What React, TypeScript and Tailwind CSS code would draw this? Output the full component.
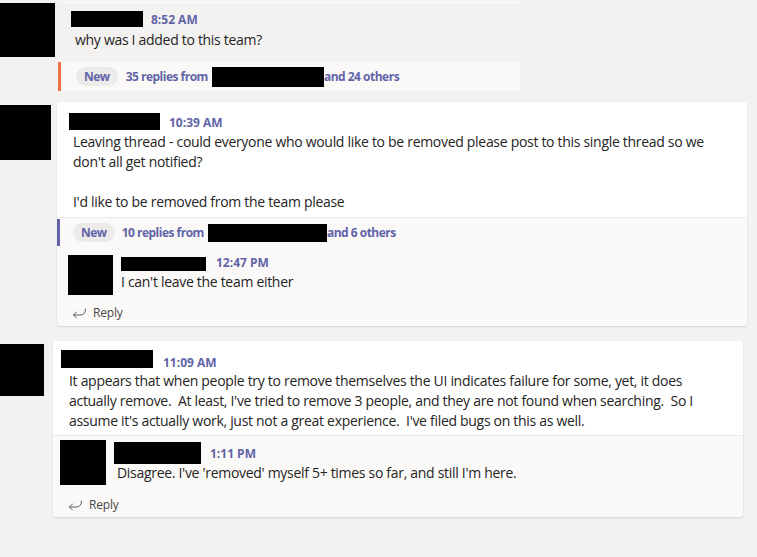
import React from 'react';

const font = { fontFamily: '"Segoe UI", "Open Sans", "Noto Sans", sans-serif' };

const Redact = ({ className }: { className: string }) => <div className={`bg-black ${className}`} />;

const ReplyIcon = () => (
  <svg width="15" height="12" viewBox="0 0 15 12" fill="none" stroke="#605e5c" strokeWidth="1" strokeLinecap="round" strokeLinejoin="round">
    <path d="M13.5 2 Q13.5 8 8 8 H1.5" />
    <path d="M4.5 5 L1.5 8 L4.5 11" />
  </svg>
);

const Time = ({ className, children }: { className: string; children: React.ReactNode }) => (
  <div className={`text-[12px] font-bold text-[#6264a7] leading-none ${className}`}>{children}</div>
);

const NewPill = () => (
  <span className="inline-flex items-center h-[19px] px-[8px] rounded-full bg-[#edebe9] text-[12px] font-bold text-[#6264a7]">New</span>
);

const ReplyRow = ({ pad }: { pad: string }) => (
  <div className={`flex items-center gap-[6px] h-[22px] ${pad}`}>
    <ReplyIcon />
    <span className="text-[12px] text-[#484644] tracking-[-0.2px]">Reply</span>
  </div>
);

const Body = ({ className, children }: { className: string; children: React.ReactNode }) => (
  <div className={`text-[14px] leading-[20px] tracking-[-0.3px] ${className}`}>{children}</div>
);

export default function App() {
  return (
    <div className="w-[757px] h-[557px] bg-[#f3f2f1] overflow-hidden text-[#252423]" style={font}>
      {/* thread 1 */}
      <div className="flex gap-[3px] pt-[1px]">
        <Redact className="w-[55px] h-[54px] mt-[2px] shrink-0" />
        <div className="w-[462px]">
          <div className="border-t-2 border-[#f8f7f6] pl-[13px] pt-[8px] h-[61px]">
            <div className="flex items-start gap-[8px]">
              <Redact className="w-[72px] h-[16px]" />
              <Time className="mt-[3px]">8:52 AM</Time>
            </div>
            <Body className="pl-[4px] mt-[3px]">why was I added to this team?</Body>
          </div>
          <div className="h-[29px] bg-[#faf9f8] border-l-[3px] border-[#e97548] flex items-center pl-[15px] text-[12px] font-bold text-[#6264a7] tracking-[-0.5px]">
            <NewPill />
            <span className="ml-[8px]">35 replies from</span>
            <Redact className="w-[112px] h-[20px] ml-[4px]" />
            <span>and 24 others</span>
          </div>
        </div>
      </div>

      {/* thread 2 */}
      <div className="flex gap-[6px] mt-[11px]">
        <Redact className="w-[51px] h-[55px] mt-[3px] shrink-0" />
        <div className="w-[690px] h-[224px] rounded-[3px] bg-[#faf9f8] shadow-[0_1px_2px_rgba(0,0,0,0.12)] overflow-hidden">
          <div className="bg-white h-[116px] border-b border-[#edebe9] pl-[12px] pt-[11px]">
            <div className="flex items-start gap-[9px]">
              <Redact className="w-[91px] h-[17px]" />
              <Time className="mt-[4px]">10:39 AM</Time>
            </div>
            <Body className="pl-[4px] mt-[2px]">
              Leaving thread - could everyone who would like to be removed please post to this single thread so we<br />
              don't all get notified?<br />
              <br />
              I'd like to be removed from the team please
            </Body>
          </div>
          <div className="h-[27px] mt-[1px] border-l-[3px] border-[#6264a7] flex items-center pl-[13px] text-[12px] font-bold text-[#6264a7] tracking-[-0.5px]">
            <NewPill />
            <span className="ml-[7px]">10 replies from</span>
            <Redact className="w-[119px] h-[18px] ml-[4px]" />
            <span>and 6 others</span>
          </div>
          <div className="flex gap-[8px] pl-[11px] pt-[9px]">
            <Redact className="w-[45px] h-[40px] shrink-0" />
            <div>
              <div className="flex items-start gap-[10px] mt-[2px]">
                <Redact className="w-[85px] h-[14px]" />
                <Time className="mt-0">12:47 PM</Time>
              </div>
              <Body className="mt-[1px]">I can't leave the team either</Body>
            </div>
          </div>
          <ReplyRow pad="pl-[15px] mt-[7px]" />
        </div>
      </div>

      {/* thread 3 */}
      <div className="flex gap-[9px] mt-[15px]">
        <Redact className="w-[44px] h-[52px] mt-[3px] shrink-0" />
        <div className="w-[690px] h-[176px] rounded-[3px] bg-[#faf9f8] shadow-[0_1px_2px_rgba(0,0,0,0.12)] overflow-hidden">
          <div className="bg-white h-[95px] border-b border-[#edebe9] pl-[8px] pt-[9px]">
            <div className="flex items-start gap-[10px]">
              <Redact className="w-[92px] h-[18px]" />
              <Time className="mt-[7px]">11:09 AM</Time>
            </div>
            <Body className="pl-[8px] mt-[2px]">
              It appears that when people try to remove themselves the UI indicates failure for some, yet, it does<br />
              actually remove.&nbsp; At least, I've tried to remove 3 people, and they are not found when searching.&nbsp; So I<br />
              assume it's actually work, just not a great experience.&nbsp; I've filed bugs on this as well.
            </Body>
          </div>
          <div className="flex gap-[8px] pl-[7px] pt-[4px]">
            <Redact className="w-[46px] h-[45px] shrink-0" />
            <div>
              <div className="flex items-start gap-[9px] mt-[2px]">
                <Redact className="w-[87px] h-[22px]" />
                <Time className="mt-[6px]">1:11 PM</Time>
              </div>
              <Body className="pl-[3px] -mt-[1px]">Disagree. I've 'removed' myself 5+ times so far, and still I'm here.</Body>
            </div>
          </div>
          <ReplyRow pad="pl-[15px] mt-[9px]" />
        </div>
      </div>
    </div>
  );
}
